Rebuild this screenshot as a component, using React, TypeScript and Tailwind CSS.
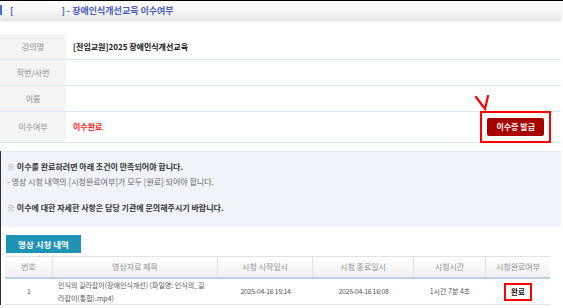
import React from 'react';

const font = { fontFamily: '"Noto Sans CJK KR", "Noto Sans", sans-serif' };

const InfoRow = ({
  label,
  children,
  tall,
}: {
  label: string;
  children?: React.ReactNode;
  tall?: boolean;
}) => (
  <div className={`flex border-b border-[#d8e7f3] ${tall ? 'h-[31px]' : 'h-[26px]'}`}>
    <div className="w-[66px] shrink-0 bg-[#f4f4f4] flex items-center justify-center text-[8px] text-[#8a8a8a]">
      {label}
    </div>
    <div className="flex-1 flex items-center pl-[7px] pr-[6px] text-[8px]">{children}</div>
  </div>
);

const cols = [
  { name: '번호', w: 'w-[48px]' },
  { name: '영상자료 제목', w: 'w-[165px]' },
  { name: '시청 시작일시', w: 'w-[95px]' },
  { name: '시청 종료일시', w: 'w-[101px]' },
  { name: '시청시간', w: 'w-[72px]' },
  { name: '시청완료여부', w: 'w-[64px]' },
];

export default function App() {
  return (
    <div className="w-[563px] h-[308px] bg-white overflow-hidden relative" style={font}>
      {/* Title bar */}
      <div className="border-t border-black">
        <div className="h-[18px] flex items-center bg-gradient-to-b from-white to-[#ececec] shadow-[0_2px_2px_rgba(0,0,0,0.12)] mr-[2px]">
          <div className="w-[2px] h-[10px] bg-[#3b6fd0]"></div>
          <div className="ml-[8px] flex items-center text-[9px] font-bold text-[#4a5cc2] leading-none">
            <span>[</span>
            <span className="w-[48px]"></span>
            <span>] - 장애인식개선교육 이수여부</span>
          </div>
        </div>
      </div>

      {/* Info table */}
      <div className="mt-[15px] mr-[2px]">
        <InfoRow label="강의명">
          <span className="font-bold text-[#111]">[전임교원]2025 장애인식개선교육</span>
        </InfoRow>
        <InfoRow label="학번/사번" />
        <InfoRow label="이름" />
        <InfoRow label="이수여부" tall>
          <span className="font-bold text-[#ff1a1a]">이수완료</span>
          <div className="ml-auto mr-[4px] relative">
            <div className="border-2 border-[#ff0000] p-[5px]">
              <button className="h-[18px] px-[9px] bg-[#a80000] rounded-[2px] text-white font-bold text-[8px] leading-none">
                이수증 발급
              </button>
            </div>
            <svg
              className="absolute left-[-6px] top-[-16px]"
              width="18"
              height="18"
              viewBox="0 0 18 18"
              fill="none"
              stroke="#ff0000"
              strokeWidth="2.2"
              strokeLinecap="round"
            >
              <path d="M2 2 L11 14 L14 1" />
            </svg>
          </div>
        </InfoRow>
      </div>

      {/* Notice box */}
      <div className="border-l border-[#333] mt-[8px]">
        <div className="bg-[#f0f4fa] border-t border-[#e4ebf3] h-[76px] pl-[6px] pt-[7px] text-[8px] leading-[15px] mr-[2px]">
          <p className="font-bold text-[#333]">
            <span className="text-[#999] font-normal">※</span> 이수를 완료하려면 아래 조건이 만족되어야 합니다.
          </p>
          <p className="text-[#666]">- 영상 시청 내역의 [시청완료여부]가 모두 [완료] 되어야 합니다.</p>
          <p className="font-bold text-[#333] mt-[11px]">
            <span className="text-[#999] font-normal">※</span> 이수에 대한 자세한 사항은 담당 기관에 문의해주시기 바랍니다.
          </p>
        </div>

        {/* Watch history */}
        <div className="pt-[8px] pl-[4px]">
          <div className="ml-[1px] w-[75px] h-[18px] bg-[#1f93b6] text-white font-bold text-[8.5px] flex items-center justify-center">
            영상 시청 내역
          </div>
          <div className="mt-[3px] w-[545px]">
            <div className="flex h-[23px] bg-gradient-to-b from-white to-[#f0f0f0] border-t border-[#e2e2e2] border-b-2 border-b-[#bfd0e2]">
              {cols.map((c, i) => (
                <div
                  key={c.name}
                  className={`${c.w} flex items-center justify-center text-[8px] text-[#8f8f8f] ${
                    i < cols.length - 1 ? 'border-r border-[#e0e0e0]' : ''
                  }`}
                >
                  {c.name}
                </div>
              ))}
            </div>
            <div className="flex h-[26px] border-b border-[#e4e4e4] text-[7px] text-[#555]">
              <div className="w-[48px] flex items-center justify-center">1</div>
              <div className="w-[165px] flex items-center pl-[5px] leading-[13px]">
                인식의 길라잡이(장애인식개선) (파일명: 인식의_길
                <br />
                라잡이(통합).mp4)
              </div>
              <div className="w-[95px] flex items-center justify-center tracking-[-0.3px]">2025-04-16 15:14</div>
              <div className="w-[101px] flex items-center justify-center tracking-[-0.3px]">2025-04-16 16:08</div>
              <div className="w-[72px] flex items-center justify-center">1시간 7분 4초</div>
              <div className="w-[64px] flex items-center justify-center">
                <div className="border-2 border-[#ff0000] px-[5px] h-[18px] flex items-center font-bold text-[#111] text-[7.5px]">
                  완료
                </div>
              </div>
            </div>
          </div>
        </div>
      </div>
    </div>
  );
}
